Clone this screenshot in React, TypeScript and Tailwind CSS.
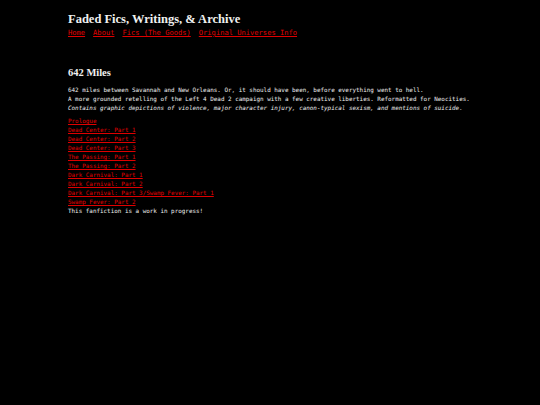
import React from "react";

const serif = { fontFamily: '"Liberation Serif", Georgia, serif' };
const mono = { fontFamily: '"DejaVu Sans Mono", monospace' };

const chapters = [
  "Prologue",
  "Dead Center: Part 1",
  "Dead Center: Part 2",
  "Dead Center: Part 3",
  "The Passing: Part 1",
  "The Passing: Part 2",
  "Dark Carnival: Part 1",
  "Dark Carnival: Part 2",
  "Dark Carnival: Part 3/Swamp Fever: Part 1",
  "Swamp Fever: Part 2",
];

export default function App() {
  return (
    <div className="min-h-[405px] w-[540px] bg-black text-[#eeeeee] pl-[68px] pt-[11px]">
      <h1 className="text-[12.5px] font-bold leading-[16px] text-[#f0f0f0]" style={serif}>
        Faded Fics, Writings, &amp; Archive
      </h1>
      <nav className="flex gap-[8px] text-[7.1px] leading-[10px] mt-[1px]" style={mono}>
        <a className="text-[#e00000] underline">Home</a>
        <a className="text-[#e00000] underline">About</a>
        <a className="text-[#e00000] underline">Fics (The Goods)</a>
        <a className="text-[#e00000] underline">Original Universes Info</a>
      </nav>
      <h2 className="mt-[29px] text-[10.5px] font-bold leading-[12px] text-[#f0f0f0]" style={serif}>
        642 Miles
      </h2>
      <div className="mt-[7px] text-[5.92px] leading-[9px]" style={mono}>
        <p>642 miles between Savannah and New Orleans. Or, it should have been, before everything went to hell.</p>
        <p>A more grounded retelling of the Left 4 Dead 2 campaign with a few creative liberties. Reformatted for Neocities.</p>
        <p className="italic">Contains graphic depictions of violence, major character injury, canon-typical sexism, and mentions of suicide.</p>
      </div>
      <div className="mt-[4px] flex flex-col text-[5.92px] leading-[9px]" style={mono}>
        {chapters.map((c) => (
          <a key={c} className="text-[#e00000] underline w-fit">{c}</a>
        ))}
        <p>This fanfiction is a work in progress!</p>
      </div>
    </div>
  );
}
